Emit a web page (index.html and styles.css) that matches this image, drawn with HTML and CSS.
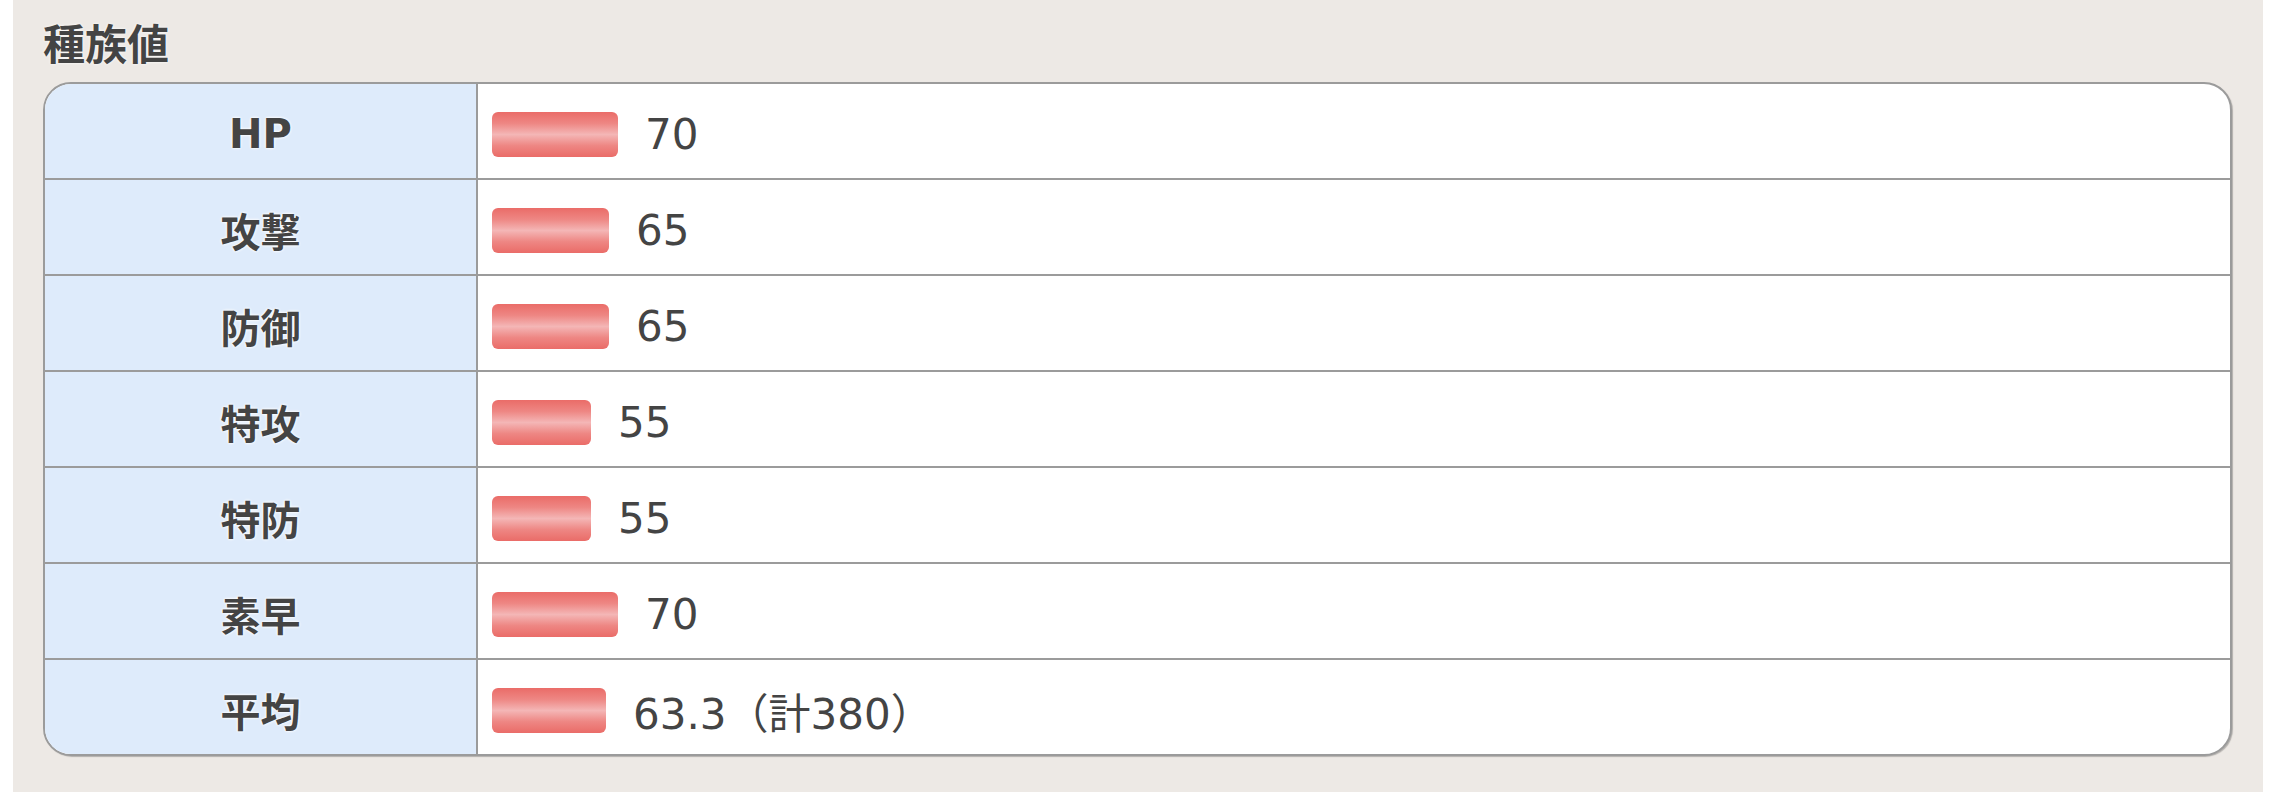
FILE: index.html
```html
<!DOCTYPE html>
<html lang="ja">
<head>
<meta charset="utf-8">
<title>種族値</title>
<link rel="stylesheet" href="styles.css">
</head>
<body>
<section class="panel">
  <h2 class="title">種族値</h2>
  <div class="stats">
    <div class="row"><div class="label latin">HP</div><div class="value"><span class="bar" style="width:126px"></span><span class="num">70</span></div></div>
    <div class="row"><div class="label">攻撃</div><div class="value"><span class="bar" style="width:117px"></span><span class="num">65</span></div></div>
    <div class="row"><div class="label">防御</div><div class="value"><span class="bar" style="width:117px"></span><span class="num">65</span></div></div>
    <div class="row"><div class="label">特攻</div><div class="value"><span class="bar" style="width:99px"></span><span class="num">55</span></div></div>
    <div class="row"><div class="label">特防</div><div class="value"><span class="bar" style="width:99px"></span><span class="num">55</span></div></div>
    <div class="row"><div class="label">素早</div><div class="value"><span class="bar" style="width:126px"></span><span class="num">70</span></div></div>
    <div class="row"><div class="label">平均</div><div class="value"><span class="bar" style="width:114px"></span><span class="num">63.3（計380）</span></div></div>
  </div>
</section>
</body>
</html>
```
FILE: styles.css
```css
html, body {
  margin: 0;
  padding: 0;
  background: #ffffff;
}

.panel {
  margin: 0 26px 0 13px;
  padding: 18px 31px 40px 30px;
  background: #ede9e5;
  min-height: 792px;
  box-sizing: border-box;
}

.title {
  margin: 0 0 16px 0;
  font-family: "Noto Sans CJK JP", "DejaVu Sans", sans-serif;
  font-weight: 700;
  font-size: 42px;
  line-height: 48px;
  color: #444444;
  text-shadow: 0 0 3px #ffffff;
}

.stats {
  border: 2px solid #9b9b9b;
  border-radius: 28px;
  overflow: hidden;
  background: #ffffff;
  box-shadow: 1px 1px 1px rgba(0, 0, 0, 0.25);
}

.row {
  display: grid;
  grid-template-columns: 433px 1fr;
  height: 94px;
}

.row + .row {
  border-top: 2px solid #9b9b9b;
}

.label {
  display: flex;
  align-items: center;
  justify-content: center;
  padding-top: 6px;
  background: #deebfb;
  border-right: 2px solid #9b9b9b;
  font-family: "DejaVu Sans", "Noto Sans CJK JP", sans-serif;
  font-weight: 700;
  font-size: 40px;
  color: #444444;
  text-shadow: 0 0 3px #ffffff, 0 0 3px #ffffff;
}

.value {
  display: flex;
  align-items: center;
  gap: 27px;
  padding: 6px 0 0 14px;
}

.bar {
  display: block;
  height: 45px;
  border-radius: 6px;
  background: linear-gradient(to bottom, #ea6c68 0%, #ee8683 25%, #f4b6b6 50%, #ee8683 75%, #ea6c68 100%);
}

.num {
  font-family: "DejaVu Sans", "Noto Sans CJK JP", sans-serif;
  font-size: 42px;
  color: #444444;
}
```
